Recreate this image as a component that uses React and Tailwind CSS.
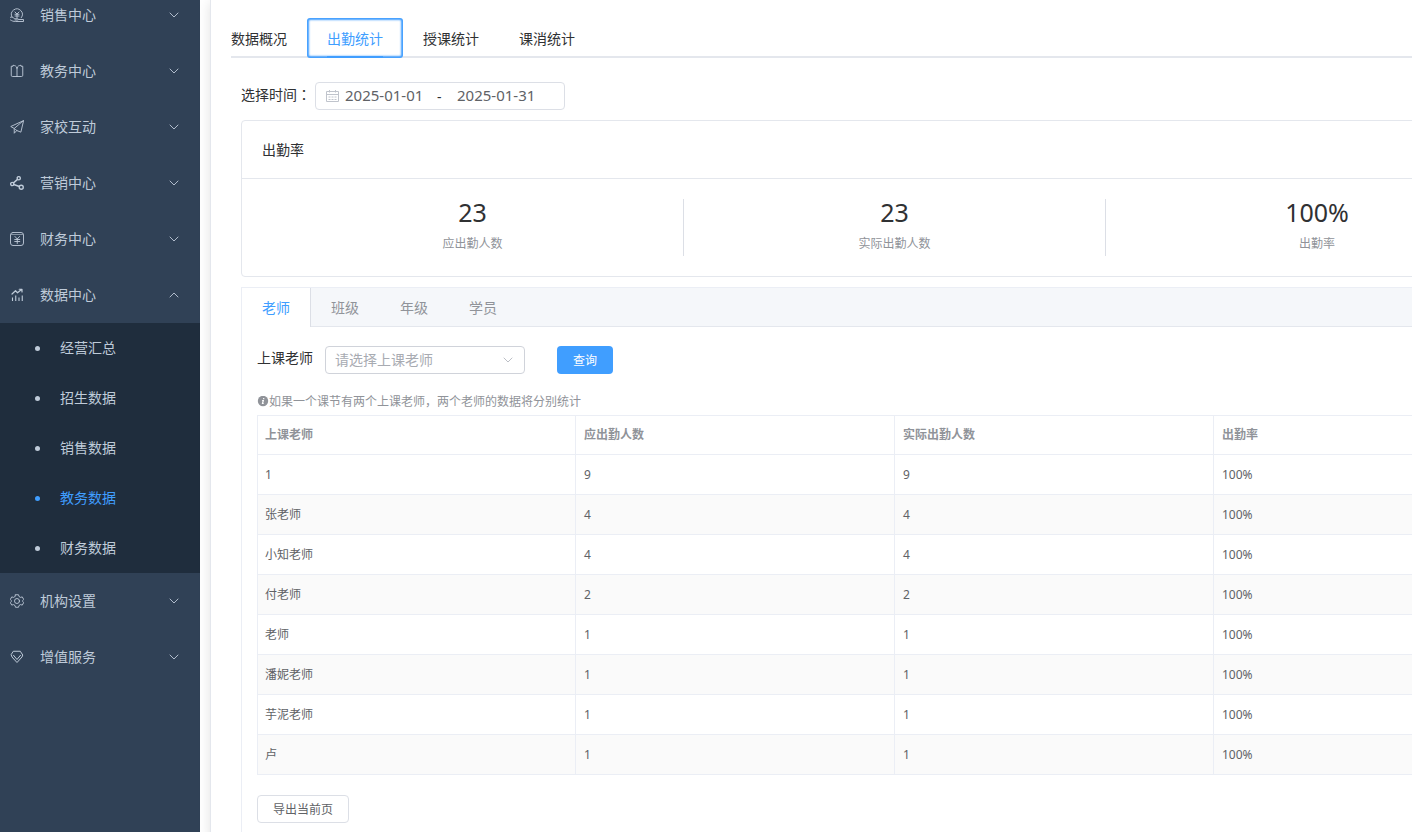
const FONT = "font-['Noto_Sans','Noto_Sans_CJK_SC',sans-serif]";

function Icon({ children, className = 'size-3.5' }) {
  return (
    <svg viewBox="0 0 28 28" fill="none" stroke="currentColor" strokeWidth="1.8" strokeLinecap="round" strokeLinejoin="round" aria-hidden="true" className={`shrink-0 ${className}`}>
      {children}
    </svg>
  );
}

const icons = {
  sales: (
    <>
      <path d="M4 18A11 11 0 1 1 22.500 19.500" />
      <path d="M10 8l4 4 4-4M14 12v8M10 12.500h8M10 16h8" />
      <path d="M1 18.500c4-1 6 .5 8 3h6.500c2 0 2 2.500 0 2.500H10" />
      <path d="M1 24c3 2 6 3 10 3h16v-4h-9" />
    </>
  ),
  book: (
    <path d="M14 8v17M14 8c-1-4-4-5-8-5.500v2H2.500v18A2.500 2.500 0 0 0 5 25h18a2.500 2.500 0 0 0 2.500-2.500v-18H22v-2C18 3 15 4 14 8z" />
  ),
  plane: (
    <>
      <path d="M26.500 1.500L1.500 13l7 4v9.500l5-5.500 7.500 3z" />
      <path d="M26.500 1.500L8.500 17M13.500 21l-2.500-2" />
    </>
  ),
  share: (
    <g strokeWidth="2.800">
      <circle cx="17.500" cy="4.500" r="3.200" />
      <circle cx="4.500" cy="16" r="3.200" />
      <circle cx="22.500" cy="22.500" r="4" />
      <path d="M15 6.800L7 13.700M7.700 17l11 4" />
    </g>
  ),
  money: (
    <>
      <rect x="1" y="1" width="26" height="26" rx="5" />
      <path d="M3 5h22" strokeWidth="1.200" />
      <path d="M10 9l4.500 5L19 9M14.500 14v9M9.500 15h10M9.500 19h10" />
    </>
  ),
  chart: (
    <>
      <path d="M4 12l7-6.500 4 4L23 3M18.500 2.500H24V8" strokeWidth="2.400" />
      <path d="M5 19v7M11.500 15v11M18 19v7M24.500 15v11" strokeWidth="2.200" strokeLinecap="butt" />
    </>
  ),
  gear: (
    <>
      <path d="M11 1.500h6l1 3.500 3 1.800 3.500-1 3 5.200-2.600 2.500v1l2.600 2.500-3 5.200-3.500-1L18 23l-1 3.500h-6L10 23l-3-1.800-3.500 1-3-5.200 2.600-2.500v-1L.5 11l3-5.200 3.500 1L10 5z" />
      <circle cx="14" cy="14" r="5" />
    </>
  ),
  gem: (
    <g strokeWidth="2">
      <path d="M7.500 2.500h13L25.500 10 24 14 14 25 4 14l-1.500-4z" />
      <path d="M7 10.500l7 8.500 7-8.500" />
    </g>
  ),
};

function Chevron({ up = false, className = 'size-3.5' }) {
  return (
    <Icon className={className}>
      <path d={up ? 'M6 18l8-8 8 8' : 'M6 10l8 8 8-8'} />
    </Icon>
  );
}

function MenuItem({ icon, label, open = false }) {
  return (
    <button type="button" aria-expanded={open} className="flex h-14 w-full items-center pr-[19px] pl-2.5 text-left">
      <Icon>{icons[icon]}</Icon>
      <span className="ml-4 flex-1">{label}</span>
      <Chevron up={open} />
    </button>
  );
}

const subItems = ['经营汇总', '招生数据', '销售数据', '教务数据', '财务数据'];

function Sidebar() {
  return (
    <aside className="w-50 shrink-0 overflow-hidden bg-[#304156] text-sm text-[#bfcbd9]">
      <nav className="-mt-[13px]">
        <MenuItem icon="sales" label="销售中心" />
        <MenuItem icon="book" label="教务中心" />
        <MenuItem icon="plane" label="家校互动" />
        <MenuItem icon="share" label="营销中心" />
        <MenuItem icon="money" label="财务中心" />
        <MenuItem icon="chart" label="数据中心" open />
        <div className="bg-[#1f2d3d]">
          {subItems.map((label) => (
            <a key={label} href="#" className={`flex h-[50px] items-center gap-5 pl-[35px] ${label === '教务数据' ? 'text-[#409eff]' : ''}`}>
              <span className="size-[5px] rounded-full bg-current" />
              <span>{label}</span>
            </a>
          ))}
        </div>
        <MenuItem icon="gear" label="机构设置" />
        <MenuItem icon="gem" label="增值服务" />
      </nav>
    </aside>
  );
}

function PageTabs() {
  return (
    <div role="tablist" className="flex h-10 border-b-2 border-[#e4e7ed] text-sm text-[#303133]">
      <button type="button" role="tab" aria-selected="false" className="h-10 pt-0.5 pr-5">数据概况</button>
      <button type="button" role="tab" aria-selected="true" className="flex h-10 flex-col rounded-[3px] px-5 text-[#409eff] shadow-[inset_0_0_2px_2px_#409eff]">
        <span className="flex h-[38px] items-center pt-1">出勤统计</span>
        <span className="h-0.5 w-full bg-[#409eff]" />
      </button>
      <button type="button" role="tab" aria-selected="false" className="h-10 px-5 pt-0.5">授课统计</button>
      <button type="button" role="tab" aria-selected="false" className="h-10 px-5 pt-0.5">课消统计</button>
    </div>
  );
}

function DateRange() {
  return (
    <div className="flex items-center">
      <label htmlFor="start-date" className="w-[74px] pb-1 text-sm leading-5 text-[#303133]">
        选择时间<span className="font-['Noto_Sans_CJK_TC',sans-serif]">：</span>
      </label>
      <div className="flex h-7 w-[250px] items-center rounded-sm border border-[#dcdfe6] pl-[9px] text-[15px] text-[#606266]">
        <svg viewBox="0 0 14 14" fill="none" stroke="#c0c4cc" aria-hidden="true" className="size-3.5 shrink-0">
          <path d="M1.500 2.500h12v10h-12zM1.500 5.500h12M4.500 1v2.500M10.500 1v2.500" />
          <path d="M3.500 8h8M3.500 10.500h8" strokeDasharray="2 1" />
        </svg>
        <input id="start-date" defaultValue="2025-01-01" className="ml-1.5 w-[92px] bg-transparent pb-0.5 outline-none" />
        <span className="w-5 pt-0.5 text-sm text-[#303133]">-</span>
        <input aria-label="结束日期" defaultValue="2025-01-31" className="w-[92px] bg-transparent pb-0.5 outline-none" />
      </div>
    </div>
  );
}

const stats = [
  ['23', '应出勤人数'],
  ['23', '实际出勤人数'],
  ['100%', '出勤率'],
];

function RateCard() {
  return (
    <section className="mt-2.5 rounded-sm border border-[#e4e7ed]">
      <h2 className="flex h-[58px] items-center border-b border-[#e4e7ed] px-5 text-sm text-[#303133]">出勤率</h2>
      <div className="grid grid-cols-3 p-5">
        {stats.map(([value, label]) => (
          <div key={label} className="flex h-[57px] flex-col items-center border-r border-[#dcdfe6] last:border-r-0">
            <span className="text-[25px] leading-[26px] text-[#303133]">{value}</span>
            <span className="mt-2.5 text-xs leading-[18px] text-[#909399]">{label}</span>
          </div>
        ))}
      </div>
    </section>
  );
}

const rows = [
  ['1', 9],
  ['张老师', 4],
  ['小知老师', 4],
  ['付老师', 2],
  ['老师', 1],
  ['潘妮老师', 1],
  ['芋泥老师', 1],
  ['卢', 1],
];

function AttendanceTable() {
  const cell = 'h-10 border-r border-b border-[#ebeef5] px-2 first:border-l first:pl-[7px]';
  return (
    <table className="w-full table-fixed border-separate border-spacing-0 text-left text-xs text-[#606266]">
      <thead className="text-[#909399]">
        <tr>
          {['上课老师', '应出勤人数', '实际出勤人数', '出勤率'].map((h) => (
            <th key={h} scope="col" className={`${cell} border-t font-bold`}>{h}</th>
          ))}
        </tr>
      </thead>
      <tbody>
        {rows.map(([name, count]) => (
          <tr key={name} className="even:bg-[#fafafa]">
            <td className={cell}>{name}</td>
            <td className={cell}>{count}</td>
            <td className={cell}>{count}</td>
            <td className={cell}>100%</td>
          </tr>
        ))}
      </tbody>
    </table>
  );
}

function DetailCard() {
  return (
    <section className="mt-2.5 flex-1 border border-[#ebeef5]">
      <div role="tablist" className="flex h-[39px] border-b border-[#e4e7ed] bg-[#f5f7fa] text-sm text-[#909399]">
        <button type="button" role="tab" aria-selected="true" className="h-[39px] border-r border-[#dcdfe6] bg-white px-5 text-[#409eff]">老师</button>
        {['班级', '年级', '学员'].map((t) => (
          <button key={t} type="button" role="tab" aria-selected="false" className="h-[39px] border-r border-transparent px-5">{t}</button>
        ))}
      </div>
      <div className="px-[15px] pt-[19px] pb-4">
        <div className="flex items-center">
          <label htmlFor="teacher" className="w-[68px] pb-1 text-sm text-[#303133]">上课老师</label>
          <div className="grid w-50 items-center">
            <select id="teacher" defaultValue="" className="col-start-1 row-start-1 h-7 appearance-none rounded-sm border border-[#d0d3da] bg-white px-[9px] text-sm text-[#a8abb2]">
              <option value="">请选择上课老师</option>
            </select>
            <Chevron className="pointer-events-none col-start-1 row-start-1 mr-2.5 size-3.5 justify-self-end text-[#b4b8c0]" />
          </div>
          <button type="button" className="ml-8 h-7 w-14 rounded-sm bg-[#409eff] pt-0.5 text-xs text-white">查询</button>
        </div>
        <p className="mt-[19px] mb-1 flex items-center text-xs leading-[18px] text-[#909399]">
          <svg viewBox="0 0 12 12" aria-hidden="true" className="size-3 shrink-0">
            <circle cx="6" cy="5" r="5.200" fill="#909399" />
            <path d="M6.700 2v1.200M5.100 4.500h1.200l-.8 3h1.200" fill="none" stroke="#fff" strokeWidth="1.200" />
          </svg>
          如果一个课节有两个上课老师，两个老师的数据将分别统计
        </p>
        <AttendanceTable />
        <button type="button" className="mt-5 h-7 w-[92px] rounded-sm border border-[#dcdfe6] bg-white pt-0.5 text-xs text-[#606266]">导出当前页</button>
      </div>
    </section>
  );
}

export default function App() {
  return (
    <div className={`flex min-h-screen overflow-hidden bg-white ${FONT}`}>
      <Sidebar />
      <main className="ml-2.5 flex min-w-0 flex-1 flex-col border-l border-[#e4e7ed] bg-white pt-[18px] pl-5 shadow-[0_2px_12px_rgba(0,0,0,0.12)]">
        <PageTabs />
        <div className="flex min-w-[1318px] flex-1 flex-col pt-6 pl-2.5">
          <DateRange />
          <RateCard />
          <DetailCard />
        </div>
      </main>
    </div>
  );
}
